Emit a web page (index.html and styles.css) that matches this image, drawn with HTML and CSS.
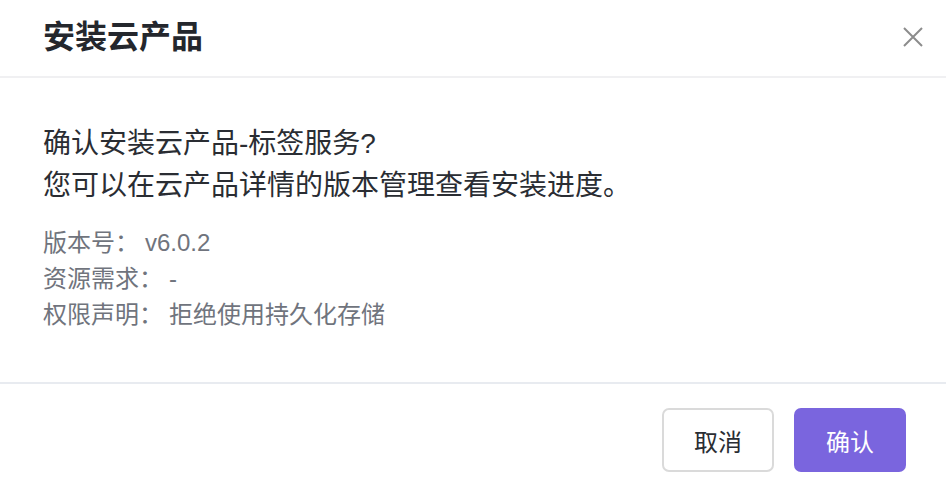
FILE: index.html
```html
<!DOCTYPE html>
<html lang="zh-CN">
<head>
<meta charset="utf-8">
<title>安装云产品</title>
<link rel="stylesheet" href="styles.css">
</head>
<body>
<div class="dialog">
  <header class="dialog-header">
    <h1 class="dialog-title">安装云产品</h1>
    <button class="close-btn" aria-label="关闭">
      <svg width="22" height="22" viewBox="0 0 22 22"><path d="M2 2 L20 20 M20 2 L2 20" stroke="#8c8c8c" stroke-width="2" fill="none"/></svg>
    </button>
  </header>
  <section class="dialog-body">
    <p class="confirm-text">确认安装云产品-标签服务?<br>您可以在云产品详情的版本管理查看安装进度。</p>
    <ul class="info-list">
      <li class="info-row"><span class="info-label">版本号：</span><span class="info-value">v6.0.2</span></li>
      <li class="info-row"><span class="info-label">资源需求：</span><span class="info-value">-</span></li>
      <li class="info-row"><span class="info-label">权限声明：</span><span class="info-value">拒绝使用持久化存储</span></li>
    </ul>
  </section>
  <footer class="dialog-footer">
    <button class="btn btn-default">取消</button>
    <button class="btn btn-primary">确认</button>
  </footer>
</div>
</body>
</html>
```
FILE: styles.css
```css
* { box-sizing: border-box; }
html, body {
  margin: 0;
  padding: 0;
  background: #ffffff;
}
body {
  font-family: "Liberation Sans", "Noto Sans CJK SC", sans-serif;
  width: 946px;
  height: 492px;
  overflow: hidden;
}
.dialog {
  display: flex;
  flex-direction: column;
  width: 946px;
}
.dialog-header {
  display: flex;
  align-items: center;
  justify-content: space-between;
  height: 78px;
  padding: 0 22px 2px 43px;
  border-bottom: 2px solid #f0f0f2;
}
.dialog-title {
  margin: 0;
  font-size: 32px;
  font-weight: 700;
  color: #24272d;
  line-height: 48px;
}
.close-btn {
  border: 0;
  background: transparent;
  padding: 0;
  width: 22px;
  height: 22px;
  display: flex;
}
.dialog-body {
  padding: 45px 43px 49px;
  border-bottom: 2px solid #e8ebf0;
}
.confirm-text {
  margin: 0 0 18px;
  font-size: 28px;
  line-height: 42px;
  color: #2a2d33;
}
.info-list {
  list-style: none;
  margin: 0;
  padding: 0;
}
.info-row {
  display: flex;
  font-size: 24px;
  line-height: 36px;
  color: #70747d;
}
.info-label {
  margin-right: 6px;
}
.dialog-footer {
  display: flex;
  justify-content: flex-end;
  gap: 20px;
  padding: 24px 40px 20px;
}
.btn {
  width: 112px;
  height: 64px;
  border-radius: 7px;
  font-family: "Liberation Sans", "Noto Sans CJK SC", sans-serif;
  font-size: 24px;
  cursor: pointer;
}
.btn-default {
  background: #ffffff;
  border: 2px solid #dadada;
  color: #2a2d33;
}
.btn-primary {
  background: #7a65de;
  border: 0;
  color: #ffffff;
}
```
